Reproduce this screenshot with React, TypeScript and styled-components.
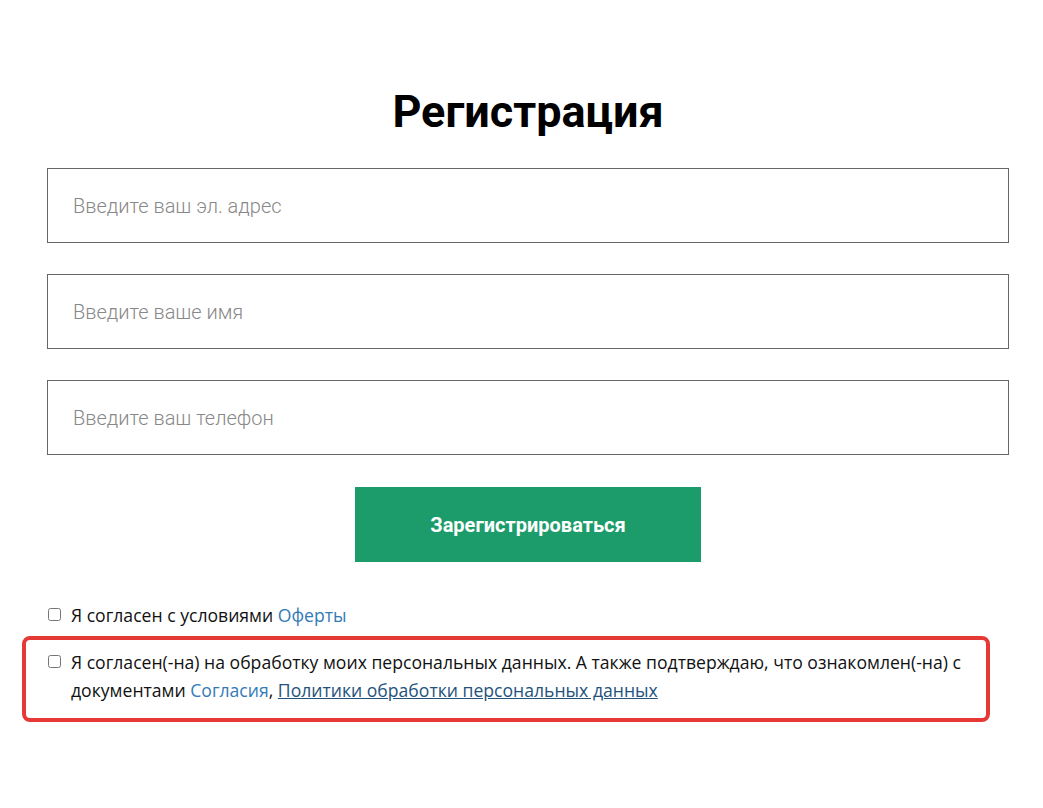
import React from "react";
import styled, { createGlobalStyle } from "styled-components";

const Global = createGlobalStyle`
  html, body { margin: 0; padding: 0; background: #fff; }
  body { font-family: "Open Sans", sans-serif; }
  * { box-sizing: border-box; }
`;

const Page = styled.div`
  width: 962px;
  margin-left: 47px;
  padding-top: 84px;
  display: flex;
  flex-direction: column;
`;

const Title = styled.h1`
  margin: 0 0 28px;
  text-align: center;
  font-family: Roboto, sans-serif;
  font-weight: 700;
  font-size: 45px;
  line-height: 56px;
  color: #000;
`;

const Fields = styled.div`
  display: flex;
  flex-direction: column;
  gap: 31px;
`;

const Input = styled.input`
  width: 100%;
  height: 75px;
  border: 1px solid #666;
  border-radius: 0;
  padding: 0 25px;
  font-family: Roboto, sans-serif;
  font-weight: 300;
  font-size: 20px;
  color: #333;
  outline: none;
  &::placeholder { color: #888; }
`;

const Button = styled.button`
  align-self: center;
  margin-top: 32px;
  width: 346px;
  height: 75px;
  border: none;
  background: #1b9c6a;
  color: #fff;
  font-family: Roboto, sans-serif;
  font-weight: 700;
  font-size: 20px;
  cursor: pointer;
`;

const Checks = styled.div`
  margin-top: 39px;
  display: flex;
  flex-direction: column;
  gap: 7px;
`;

const Row = styled.label<{ $highlight?: boolean }>`
  display: flex;
  align-items: flex-start;
  gap: 10px;
  font-family: "Open Sans", sans-serif;
  font-size: 17.6px;
  line-height: 28px;
  color: #111;
  ${(p) =>
    p.$highlight
      ? `
    margin-left: -25px;
    width: 968px;
    border: 4px solid #e53935;
    border-radius: 8px;
    padding: 8px 22px 14px 22px;
  `
      : `padding-left: 1px;`}
`;

const Box = styled.input`
  margin: 7px 0 0;
  width: 13px;
  height: 13px;
  flex: none;
`;

const Link = styled.a<{ $underline?: boolean }>`
  color: ${(p) => (p.$underline ? "#23527c" : "#337ab7")};
  text-decoration: ${(p) => (p.$underline ? "underline" : "none")};
`;

export default function App() {
  return (
    <>
      <Global />
      <Page>
        <Title>Регистрация</Title>
        <Fields>
          <Input placeholder="Введите ваш эл. адрес" />
          <Input placeholder="Введите ваше имя" />
          <Input placeholder="Введите ваш телефон" />
        </Fields>
        <Button>Зарегистрироваться</Button>
        <Checks>
          <Row>
            <Box type="checkbox" />
            <span>
              Я согласен с условиями <Link href="#">Оферты</Link>
            </span>
          </Row>
          <Row $highlight>
            <Box type="checkbox" />
            <span>
              Я согласен(-на) на обработку моих персональных данных. А также подтверждаю, что ознакомлен(-на) с
              документами <Link href="#">Согласия</Link>,{" "}
              <Link href="#" $underline>
                Политики обработки персональных данных
              </Link>
            </span>
          </Row>
        </Checks>
      </Page>
    </>
  );
}
